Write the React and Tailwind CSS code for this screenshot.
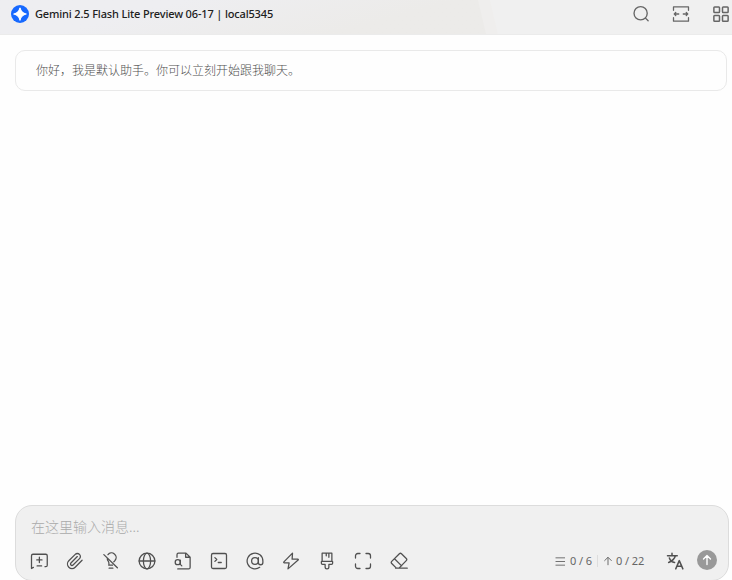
import React from 'react';

function Icon({ children, className = 'size-[18px]', width = 1.7 }) {
  return (
    <svg viewBox="0 0 24 24" fill="none" stroke="currentColor" strokeWidth={width} strokeLinecap="round" strokeLinejoin="round" className={`block shrink-0 ${className}`}>
      {children}
    </svg>
  );
}

const tools = [
  <><path d="M4.500 20.500 2 22V5a2 2 0 0 1 2-2h17a2 2 0 0 1 2 2v12.500a2 2 0 0 1-2 2h-1" /><path d="M12.500 7v7M9 10.500h7M9.500 18.500h6" /></>,
  <path d="m21.44 11.05-9.19 9.19a6 6 0 0 1-8.49-8.49l8.57-8.57A4 4 0 1 1 18 8.84l-8.59 8.57a2 2 0 0 1-2.83-2.83l8.49-8.48" />,
  <><path d="M2.500 3.500 20.500 21M9 17.500h5M9.500 21.500h5M8 3.500a6 6 0 0 1 9.500 7.500q-.7 1.200-1.700 2M7 8.500q0 2 1.500 4c1 1.300.7 3 .7 5" /></>,
  <><circle cx="12" cy="12" r="10.500" /><ellipse cx="12" cy="12" rx="4.800" ry="10.500" /><path d="M1.500 12h21" /></>,
  <><path d="M4 7V3.500a2 2 0 0 1 2-2h10L21.500 7v13.500a2 2 0 0 1-2 2H5M15.500 1.500V7h6" /><circle cx="5" cy="13.500" r="3.400" /><path d="M8.400 11v5.500l2 2" /></>,
  <><rect x="2" y="2" width="20" height="20" rx="2" /><path d="m6.500 7.500 2.500 2.500-2.500 2.500M11 14h4" /></>,
  <><circle cx="12" cy="12" r="4.500" /><path d="M16.500 7.500V14a3 3 0 0 0 6 0v-2a10.500 10.500 0 1 0-4.200 8.400" /></>,
  <path d="M14 1.500 2.500 13.200c-.5.600-.2 1.300.6 1.300h6.400L8 22.500 21.500 10.800c.6-.6.300-1.300-.5-1.300h-7.500z" />,
  <path d="M5.500 1.500h13V12l1 1v2a1.500 1.500 0 0 1-1.500 1.500h-3.500V20a2.500 2.500 0 0 1-5 0v-3.500H6A1.500 1.500 0 0 1 4.500 15v-2l1-1zM5 12.500h14M11 2v3M14.500 2v5" />,
  <path d="M2 8V5a3 3 0 0 1 3-3h3M16 2h3a3 3 0 0 1 3 3v3M22 16v3a3 3 0 0 1-3 3h-3M8 22H5a3 3 0 0 1-3-3v-3" />,
  <path d="M8.500 21.500 2.300 15.300a2 2 0 0 1 0-2.800L12.500 2.300a2 2 0 0 1 2.800 0l6.400 6.400a2 2 0 0 1 0 2.800L12 21.500M6 9l9.500 9.500M7.500 21.500H23" />,
];

function Header() {
  return (
    <header className="relative flex h-[35px] items-start overflow-hidden border-b border-[#ebebeb] bg-[#f0f0f0] pl-[11px] pt-[5px]">
      <div className="absolute inset-y-0 left-0 w-[498px] bg-[#efeeed] [clip-path:polygon(0_0,490px_0,498px_100%,0_100%)]" />
      <div className="absolute inset-y-0 left-0 w-[486px] bg-linear-165 from-[#eeeef1] from-30% to-[#ecebe9] to-75% [clip-path:polygon(0_0,478px_0,486px_100%,0_100%)]" />
      <svg viewBox="0 0 18 18" className="relative size-[18px]">
        <circle cx="9" cy="9" r="9" fill="#1769ff" />
        <path d="M9 2.800Q10 8 15.200 9 10 10 9 15.200 8 10 2.800 9 8 8 9 2.800" fill="white" stroke="white" strokeWidth="1.200" strokeLinejoin="round" />
      </svg>
      <h1 className="relative ml-[6px] whitespace-nowrap text-[11px] leading-[18px] font-medium tracking-[-0.15px] text-[#202020]">Gemini 2.5 Flash Lite Preview 06-17 | local5345</h1>
      <div className="relative ml-auto flex gap-[22px] pr-[2px] text-[#666]">
        <Icon width={1.8}><circle cx="11.500" cy="11" r="8.800" /><path d="m18 17.500 3.500 3.500" /></Icon>
        <Icon width={1.7}><path d="M2 7V2.500h20V7M2 17v4.500h20V17M3 12h6M5 10l-2 2 2 2M15 12h6M19 10l2 2-2 2" /></Icon>
        <Icon width={2}><rect x="2.500" y="2.500" width="7.500" height="7.500" rx="1" /><rect x="14" y="2.500" width="7.500" height="7.500" rx="1" /><rect x="2.500" y="14" width="7.500" height="7.500" rx="1" /><rect x="14" y="14" width="7.500" height="7.500" rx="1" /></Icon>
      </div>
    </header>
  );
}

export default function App() {
  return (
    <div className="flex h-[580px] w-[732px] flex-col overflow-hidden bg-[#fefefe] font-['Noto_Sans','Noto_Sans_CJK_SC',sans-serif]">
      <Header />
      <main className="flex-1 pl-[15px] pr-[5px] pt-[15px]">
        <div className="flex h-[41px] items-center rounded-[10px] border border-[#e9e9e9] pb-0.5 pl-5 font-['Noto_Sans_CJK_SC',sans-serif] text-xs font-light text-[#505050]">你好，我是默认助手。你可以立刻开始跟我聊天。</div>
      </main>
      <footer className="mb-[-1px] ml-[15px] mr-[3px] h-[76px] shrink-0 rounded-[17px] border border-[#dcdcdc] bg-[#f0f0f0] pt-[10px]">
        <div className="h-5 pl-[15px] font-['Noto_Sans_CJK_SC',sans-serif] text-sm leading-5 font-light text-[#aaa]">在这里输入消息...</div>
        <div className="flex h-[48px] items-start pl-[14px] pr-[11px] pt-[16px] text-[#505050]">
          <div className="flex gap-[18px]">
            {tools.map((shape, i) => <Icon key={i}>{shape}</Icon>)}
          </div>
          <div className="ml-auto flex h-[18px] items-center text-[11px] tracking-[-0.1px] text-[#666]">
            <Icon className="size-[11px]" width={2}><path d="M2 4h19M2 12h19M2 20h19" /></Icon>
            <span className="ml-1 w-[22px] whitespace-nowrap">0 / 6</span>
            <span className="ml-[5px] mr-[5px] h-3 w-px bg-[#ddd]" />
            <Icon className="size-[10px]" width={2.3}><path d="M12 21V4M4 11l8-8 8 8" /></Icon>
            <span className="ml-[3px] w-7 whitespace-nowrap">0 / 22</span>
          </div>
          <Icon className="ml-[22px] size-[18px]" width={2}><path d="M8 1.500v2M2 5h13M4.500 8c1 3 4 5.500 7 6M12.500 5c-1 4-4 7-9 9M13 22.500l4.700-11 4.800 11M15 19h5.500" /></Icon>
          <div className="-mt-[2px] ml-[13px] flex size-5 items-center justify-center rounded-full bg-[#999] text-white">
            <Icon className="size-3" width={2.7}><path d="M12 21V3M5 10l7-7 7 7" /></Icon>
          </div>
        </div>
      </footer>
    </div>
  );
}
